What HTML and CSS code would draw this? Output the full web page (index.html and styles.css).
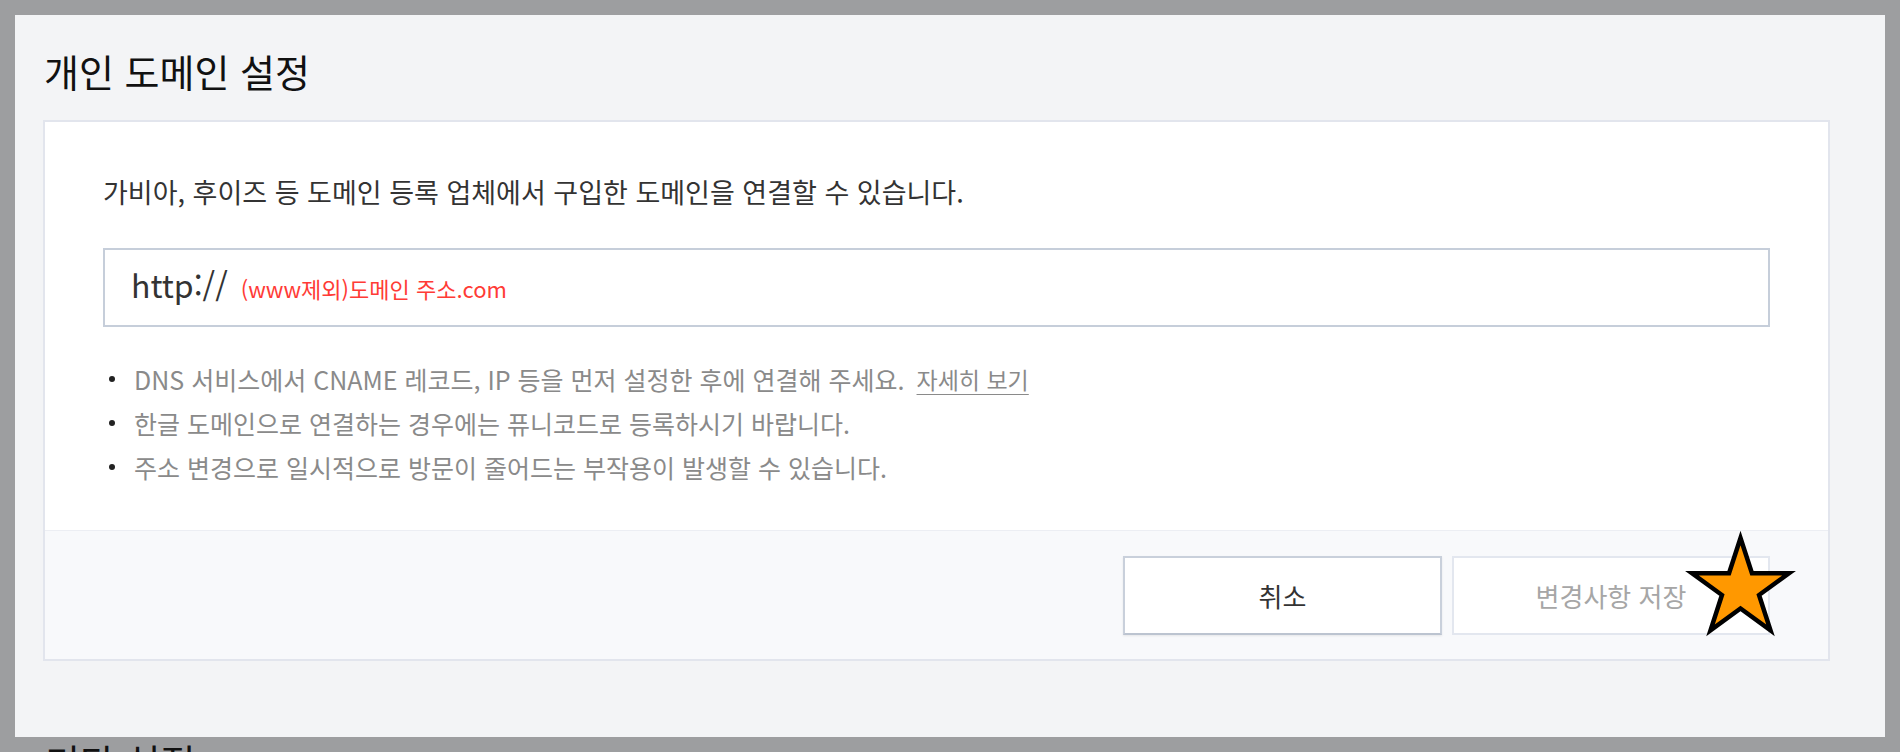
FILE: index.html
```html
<!DOCTYPE html>
<html lang="ko">
<head>
<meta charset="utf-8">
<title>개인 도메인 설정</title>
<link rel="stylesheet" href="styles.css">
</head>
<body>
<div class="page">
  <section class="panel">
    <h2 class="panel-title">개인 도메인 설정</h2>
    <div class="card">
      <div class="card-body">
        <p class="desc">가비아, 후이즈 등 도메인 등록 업체에서 구입한 도메인을 연결할 수 있습니다.</p>
        <div class="domain-input">
          <span class="prefix">http://</span>
          <span class="placeholder">(www제외)도메인 주소.com</span>
        </div>
        <ul class="notes">
          <li>DNS 서비스에서 CNAME 레코드, IP 등을 먼저 설정한 후에 연결해 주세요. <a class="more" href="#">자세히 보기</a></li>
          <li>한글 도메인으로 연결하는 경우에는 퓨니코드로 등록하시기 바랍니다.</li>
          <li>주소 변경으로 일시적으로 방문이 줄어드는 부작용이 발생할 수 있습니다.</li>
        </ul>
      </div>
      <div class="card-footer">
        <button class="btn btn-cancel" type="button">취소</button>
        <button class="btn btn-save" type="button">변경사항 저장
          <svg class="star" width="130" height="125" viewBox="0 0 130 125" aria-hidden="true">
            <polygon points="64.5,16 75.96,51.22 113,51.24 83.05,73.03 94.48,108.26 64.5,86.5 34.52,108.26 45.95,73.03 16,51.24 53.04,51.22" fill="#ff9800" stroke="#000" stroke-width="4.5" stroke-linejoin="miter"/>
          </svg>
        </button>
      </div>
    </div>
  </section>
  <h2 class="next-title">기타 설정</h2>
</div>
</body>
</html>
```

FILE: styles.css
```css
html, body {
  margin: 0;
  padding: 0;
}

body {
  background: #9d9ea0;
  font-family: "Noto Sans CJK KR", "Noto Sans", sans-serif;
  color: #222;
  height: 752px;
  overflow: hidden;
}

.page {
  padding: 15px 15px 0 15px;
}

.panel {
  box-sizing: border-box;
  height: 722px;
  background: #f3f4f6;
  padding: 27px 55px 0 28px;
}

.panel-title {
  margin: 0 0 20px 0;
  padding-left: 1px;
  font-size: 38px;
  line-height: 58px;
  font-weight: 400;
  color: #111;
}

.card {
  background: #fff;
  border: 2px solid #e2e5ed;
}

.card-body {
  padding: 52px 58px 41px 58px;
}

.desc {
  margin: 0;
  font-size: 27px;
  line-height: 36px;
  color: #333;
}

.domain-input {
  box-sizing: border-box;
  margin-top: 38px;
  height: 79px;
  border: 2px solid #c6ceda;
  background: #fff;
  padding: 0 24px 7px 26px;
  line-height: 68px;
  font-size: 32px;
  white-space: nowrap;
}

.prefix {
  color: #333;
  font-size: 32px;
}

.placeholder {
  color: #ff3b36;
  font-size: 22px;
  margin-left: 4px;
}

.notes {
  list-style: none;
  margin: 30px 0 0 0;
  padding: 0 0 0 6px;
}

.notes li {
  display: flex;
  align-items: center;
  font-size: 25px;
  line-height: 44px;
  color: #8a8a8a;
  white-space: nowrap;
}

.notes li::before {
  content: "";
  flex: none;
  width: 6px;
  height: 6px;
  border-radius: 50%;
  background: #222;
  margin-right: 19px;
}

.more {
  margin-left: 12px;
  font-size: 23px;
  color: #8a8a8a;
  text-decoration: underline;
  text-decoration-thickness: 1px;
  text-underline-offset: 5px;
}

.card-footer {
  display: flex;
  justify-content: flex-end;
  gap: 10px;
  background: #f8f9fb;
  border-top: 1px solid #eceef3;
  padding: 25px 58px 24px 58px;
}

.btn {
  box-sizing: border-box;
  width: 319px;
  height: 79px;
  background: #fff;
  font-family: "Noto Sans CJK KR", "Noto Sans", sans-serif;
  font-size: 26px;
  padding: 0;
  cursor: pointer;
}

.btn-cancel {
  border: 2px solid #c9d0db;
  border-bottom-color: #bcc4d0;
  color: #333;
  box-shadow: 0 1px 2px rgba(0, 0, 0, 0.08);
}

.btn-save {
  position: relative;
  width: 318px;
  border: 2px solid #e3e7ef;
  color: #a6a6a6;
}

.star {
  position: absolute;
  left: 222px;
  top: -36px;
}

.next-title {
  margin: 4px 0 0 30px;
  font-size: 38px;
  line-height: 40px;
  font-weight: 400;
  color: #111;
}
```
